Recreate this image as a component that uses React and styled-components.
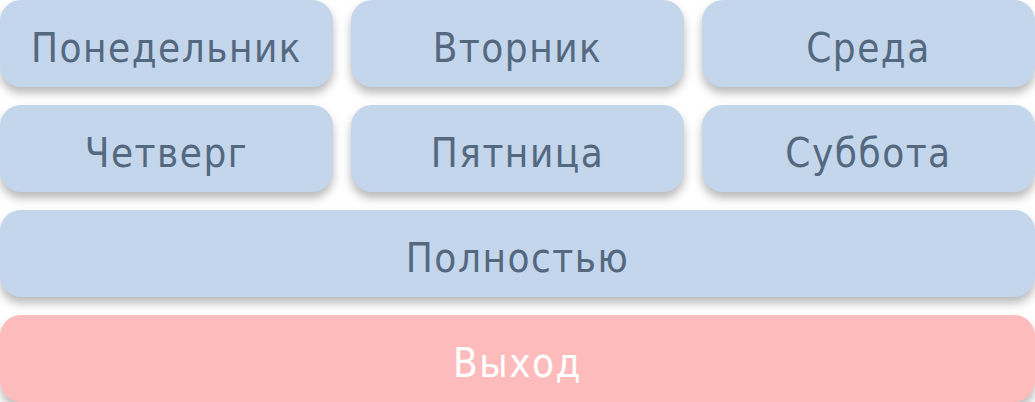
import styled, { createGlobalStyle } from 'styled-components';

const GlobalStyle = createGlobalStyle`
    html, body {
        margin: 0;
        padding: 0;
        background: #FFFFFF;
    }
`;

const Menu = styled.div`
    display: grid;
    grid-template-columns: repeat(3, 1fr);
    grid-auto-rows: 87px;
    gap: 18px;
    width: 1035px;
    height: 402px;
    overflow: hidden;
`;

const MenuButton = styled.button`
    grid-column: ${({ $wide }) => ($wide ? '1 / -1' : 'auto')};
    display: flex;
    align-items: center;
    justify-content: center;
    border: none;
    border-radius: 21px;
    background: ${({ $danger }) => ($danger ? '#FDBBBC' : '#C3D6EB')};
    box-shadow: 0 6px 10px rgba(0, 0, 0, 0.28);
    font-family: "DejaVu Sans Condensed", "DejaVu Sans", sans-serif;
    font-size: 40px;
    font-weight: normal;
    letter-spacing: 1.5px;
    color: ${({ $danger }) => ($danger ? '#FFFFFF' : '#54687F')};
    cursor: pointer;
    padding: 9px 0 0;
`;

const days = ['Понедельник', 'Вторник', 'Среда', 'Четверг', 'Пятница', 'Суббота'];

export default () => (
    <>
        <GlobalStyle />
        <Menu>
            {days.map(day => <MenuButton key={day}>{day}</MenuButton>)}
            <MenuButton $wide>Полностью</MenuButton>
            <MenuButton $wide $danger>Выход</MenuButton>
        </Menu>
    </>
);
